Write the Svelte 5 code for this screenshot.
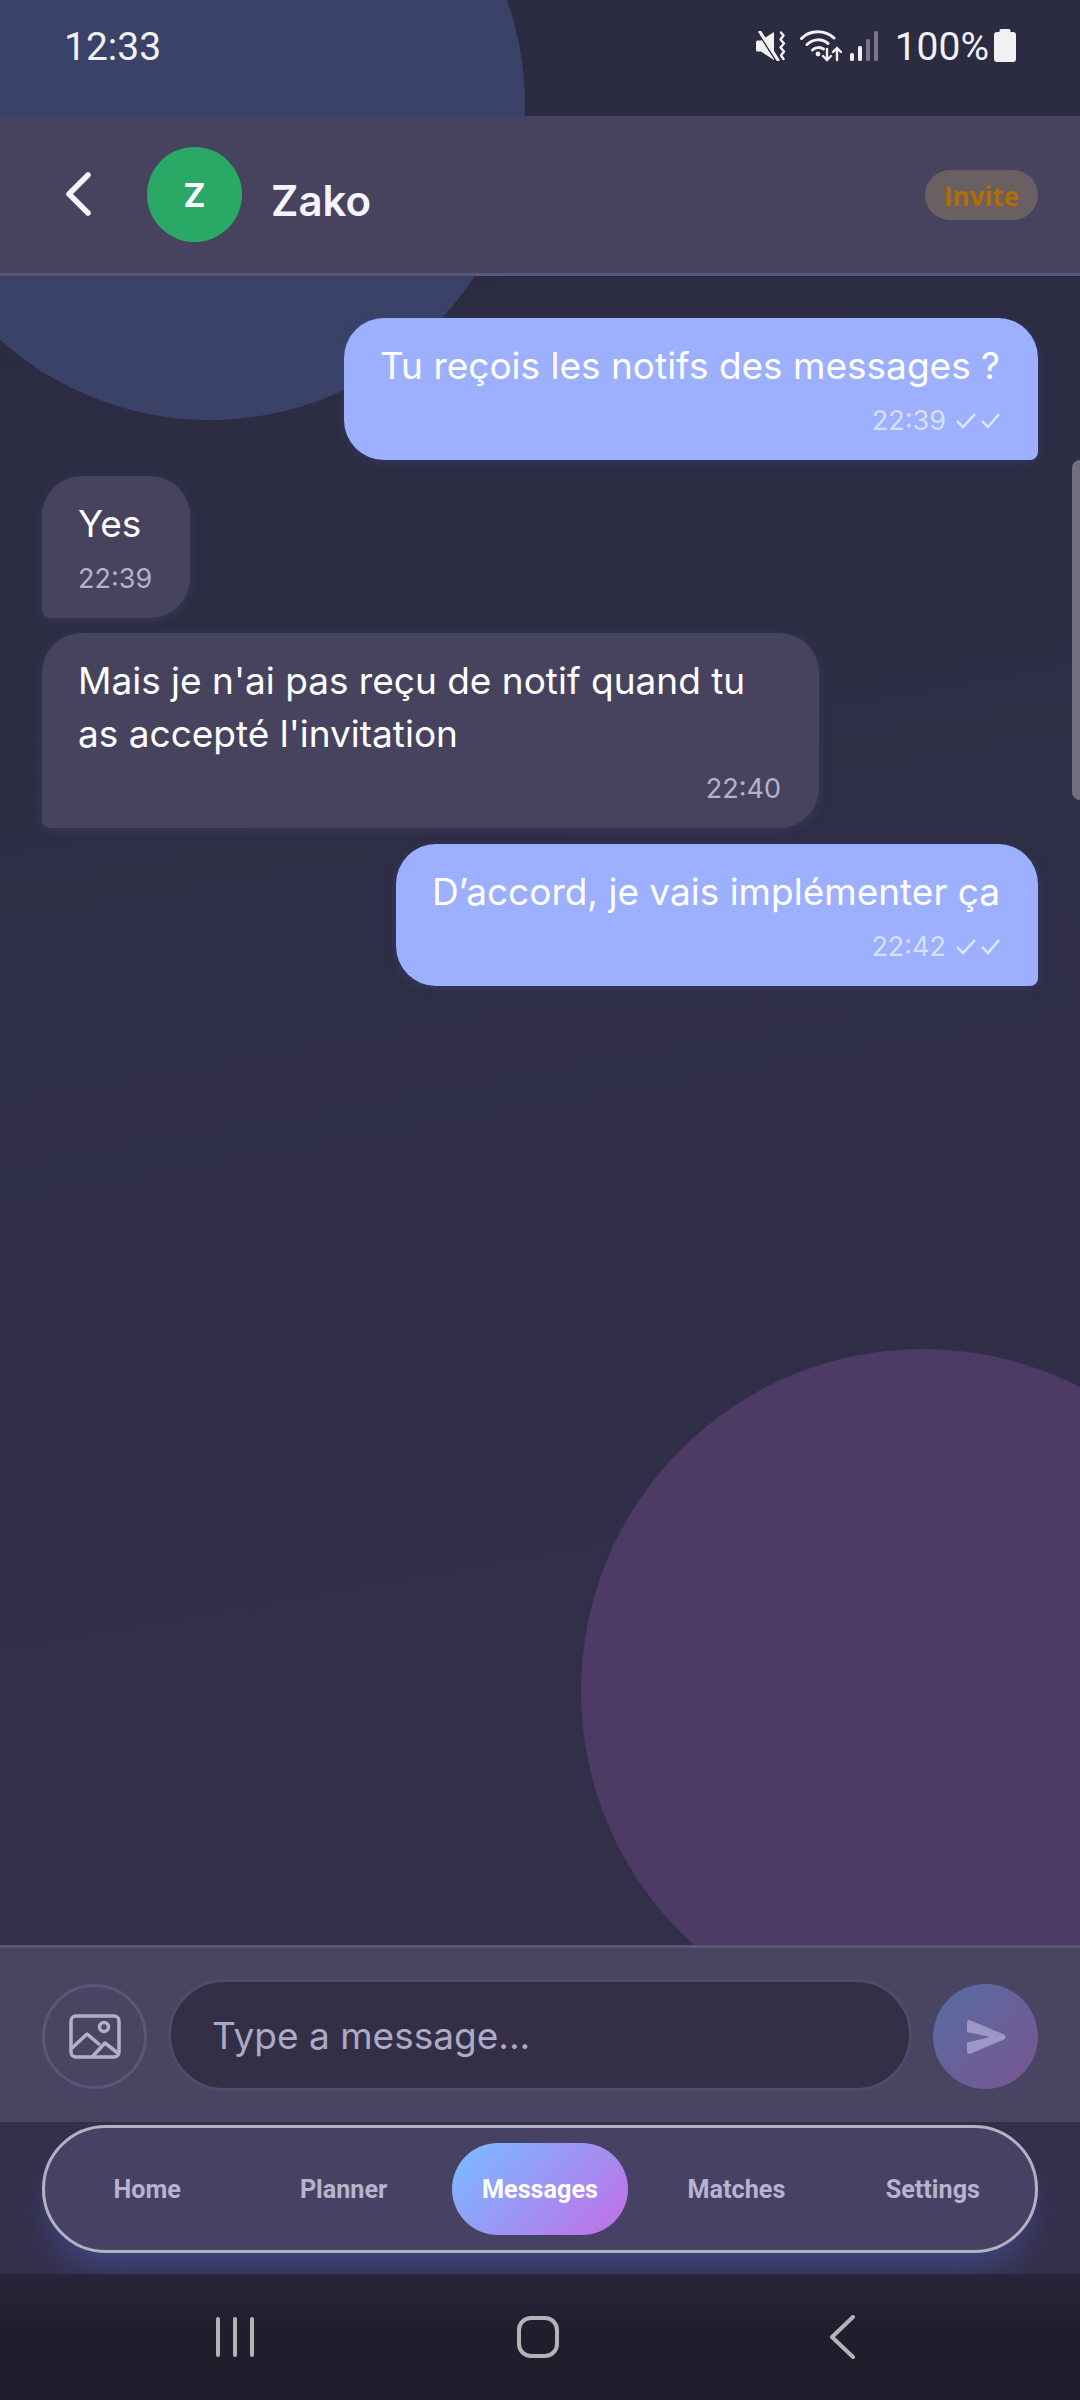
<script lang="ts">
const tabs = ["Home", "Planner", "Messages", "Matches", "Settings"];
const active = "Messages";

const messages = [
  { id: 1, mine: true, text: "Tu reçois les notifs des messages ?", time: "22:39" },
  { id: 2, mine: false, text: "Yes", time: "22:39" },
  { id: 3, mine: false, text: "Mais je n'ai pas reçu de notif quand tu as accepté l'invitation", time: "22:40" },
  { id: 4, mine: true, text: "D’accord, je vais implémenter ça", time: "22:42" },
];
</script>

<div class="screen">
  <div class="blob blue"></div>
  <div class="blob pink"></div>

  <div class="status">
    <span class="clock">12:33</span>
    <div class="status-right">
      <svg class="ic-mute" width="30" height="30" viewBox="0 0 30 30" fill="none">
        <path d="M0 11q0-1.500 1.500-1.500H5L18 1v28L5 20.500H1.500Q0 20.500 0 19z" fill="#f1f1f4" />
        <path d="M1 -1l20 31" stroke="#2b2b42" stroke-width="3" />
        <path d="M4 1l18 28" stroke="#f1f1f4" stroke-width="3.200" stroke-linecap="round" />
        <path d="M25 1.500l2.500 3-3 4 3.500 4-3.500 4 3.500 4-3 4 2.500 3.500" stroke="#f1f1f4" stroke-width="2.400" stroke-linecap="round" stroke-linejoin="round" />
      </svg>
      <svg class="ic-wifi" width="42" height="32" viewBox="0 0 42 32" fill="none" stroke="#f1f1f4" stroke-linecap="round">
        <path d="M1.500 8.500C10 -.5 25 -.5 34 8" stroke-width="3" />
        <path d="M7 14.500c6-6 15-6 21-1" stroke-width="3" />
        <path d="M12.500 20c3-3 8-3 11-1" stroke-width="3" />
        <circle cx="18" cy="24" r="2.400" fill="#f1f1f4" stroke="none" />
        <path d="M27 19v11m-4-4l4 4 4-4" stroke-width="2.400" />
        <path d="M37 30V18m-4 4l4-4 4 4" stroke-width="2.400" />
      </svg>
      <svg class="ic-signal" width="28" height="30" viewBox="0 0 28 30">
        <rect x="0" y="22" width="4" height="8" rx="1.500" fill="#f1f1f4" />
        <rect x="8" y="15" width="4" height="15" rx="1.500" fill="#f1f1f4" />
        <rect x="16" y="8" width="4" height="22" rx="1.500" fill="#77758a" />
        <rect x="24" y="0" width="4" height="30" rx="1.500" fill="#77758a" />
      </svg>
      <span class="battery-text">100%</span>
      <svg width="22" height="33" viewBox="0 0 22 33">
        <path d="M7 0h8q1.500 0 1.500 1.500V3H19q3 0 3 3v24q0 3-3 3H3q-3 0-3-3V6q0-3 3-3h2.500V1.500Q5.500 0 7 0z" fill="#f1f1f4" />
      </svg>
    </div>
  </div>

  <header class="topbar">
    <svg class="back" width="26" height="44" viewBox="0 0 26 44" fill="none">
      <path d="M23 3L4 22l19 19" stroke="#f6f4ff" stroke-width="5.500" stroke-linecap="round" stroke-linejoin="round" />
    </svg>
    <div class="avatar">Z</div>
    <span class="name">Zako</span>
    <span class="invite">Invite</span>
  </header>

  <main class="thread">
    {#each messages as m (m.id)}
      <div class="bubble" class:mine={m.mine}>
        <p>{m.text}</p>
        <div class="meta">
          <span>{m.time}</span>
          {#if m.mine}
            <svg width="44" height="16" viewBox="0 0 44 16" fill="none" stroke="#e4e8fd" stroke-width="2.400">
              <path d="M1 8l6 6L19 1" />
              <path d="M26 8l6 6L43 1" />
            </svg>
          {/if}
        </div>
      </div>
    {/each}
    <div class="scrollbar"></div>
  </main>

  <div class="composer">
    <button class="attach" aria-label="Attach image">
      <svg width="52" height="45" viewBox="0 0 52 45" fill="none" stroke="#b3afcb" stroke-width="3.500" stroke-linejoin="round">
        <rect x="2" y="2" width="48" height="41" rx="5" />
        <circle cx="35" cy="13" r="4.500" />
        <path d="M3 34l15-14 13 11M23 43l13-14 14 11" />
      </svg>
    </button>
    <div class="input"><span>Type a message...</span></div>
    <button class="send" aria-label="Send">
      <svg width="42" height="36" viewBox="0 0 42 36">
        <path d="M2 3.500Q2 .500 5 1.200L39 15.500q3 2.500 0 5L5 34.800Q2 35.500 2 32.500V23.500L25 18 2 13z" fill="#9d97c6" />
      </svg>
    </button>
  </div>

  <div class="navband">
    <nav class="tabs">
      {#each tabs as t}
        <span class="tab" class:on={t === active}>{t}</span>
      {/each}
    </nav>
  </div>

  <div class="sysnav">
    <svg width="40" height="42" viewBox="0 0 40 42" fill="#b5b3b8">
      <rect x="0" y="1" width="4" height="40" rx="2" />
      <rect x="17" y="1" width="4" height="40" rx="2" />
      <rect x="34" y="1" width="4" height="40" rx="2" />
    </svg>
    <svg width="42" height="42" viewBox="0 0 42 42" fill="none" stroke="#b5b3b8" stroke-width="4">
      <rect x="2" y="2" width="38" height="38" rx="12" />
    </svg>
    <svg width="26" height="44" viewBox="0 0 26 44" fill="none" stroke="#b5b3b8" stroke-width="4" stroke-linecap="round" stroke-linejoin="round">
      <path d="M24 2L3 22l21 20" />
    </svg>
  </div>
</div>

<style>
  :global(body) { margin: 0; background: #2b2b42; }
  .screen {
    position: relative;
    width: 1080px;
    height: 2400px;
    overflow: hidden;
    display: flex;
    flex-direction: column;
    background: linear-gradient(170deg, #2a2a40 0%, #2e2e46 40%, #36304b 100%);
    color: #fff;
    font-family: Inter, "Liberation Sans", sans-serif;
  }
  .blob { position: absolute; border-radius: 50%; }
  .blob.blue { left: -105px; top: -210px; width: 630px; height: 630px; background: #3a4268; }
  .blob.pink { left: 581px; top: 1349px; width: 684px; height: 684px; background: #4e3b65; }

  .status {
    position: relative;
    height: 116px;
    display: flex;
    justify-content: space-between;
    padding: 25px 64px 0 64px;
    box-sizing: border-box;
    font-family: Roboto, sans-serif;
    font-size: 39px;
    color: #f1f1f4;
  }
  .clock { line-height: 44px; height: 44px; }
  .status-right { display: flex; align-items: flex-start; height: 44px; }
  .status-right svg { margin-top: 4px; }
  .ic-mute { margin-right: 14px; margin-top: 6px !important; }
  .ic-wifi { margin-right: 8px; margin-top: 5px !important; }
  .ic-signal { margin-top: 6px !important; margin-right: 17px; }
  .battery-text { line-height: 44px; margin-right: 5px; }

  .topbar {
    position: relative;
    height: 160px;
    box-sizing: border-box;
    border-bottom: 3px solid #5a5678;
    background: #47435f;
    display: flex;
    align-items: center;
    padding: 0 42px 0 65px;
  }
  .back { margin-right: 56px; margin-top: -1px; }
  .avatar {
    width: 95px;
    height: 95px;
    border-radius: 50%;
    background: #2aa866;
    display: flex;
    align-items: center;
    justify-content: center;
    font-size: 33px;
    font-weight: 700;
    margin-right: 29px;
  }
  .name { font-size: 42px; font-weight: 600; color: #f5f3ff; margin-top: 11px; }
  .invite {
    margin-left: auto;
    width: 113px;
    height: 50px;
    border-radius: 25px;
    background: #6a5f62;
    color: #b06e00;
    font-family: "Open Sans", sans-serif;
    font-size: 26px;
    font-weight: 700;
    display: flex;
    align-items: center;
    justify-content: center;
    padding-top: 2px;
    box-sizing: border-box;
  }

  .thread {
    position: relative;
    flex: 1;
    display: flex;
    flex-direction: column;
    align-items: flex-start;
    gap: 15.700px;
    padding: 42px 42px 0;
  }
  .bubble {
    box-sizing: border-box;
    max-width: 777px;
    padding: 21px 38px 19px 36px;
    border-radius: 40px 40px 40px 8px;
    background: #47435f;
    box-shadow: 0 2px 10px rgba(70, 80, 140, 0.35);
    font-size: 37px;
    line-height: 53px;
  }
  .bubble p { margin: 0 0 9px; }
  .bubble.mine {
    align-self: flex-end;
    background: #9cb0ff;
    border-radius: 40px 40px 8px 40px;
  }
  .meta {
    display: flex;
    justify-content: flex-end;
    align-items: center;
    gap: 10px;
    font-size: 27px;
    line-height: 40px;
    color: #b5b1cc;
  }
  .bubble.mine .meta { color: #d9dffb; }
  .scrollbar {
    position: absolute;
    right: 0;
    top: 184px;
    width: 8px;
    height: 340px;
    border-radius: 8px 0 0 8px;
    background: #71707f;
  }

  .composer {
    position: relative;
    height: 177px;
    box-sizing: border-box;
    border-top: 3px solid #5a5678;
    background: #484462;
    display: flex;
    align-items: center;
    gap: 21px;
    padding: 3px 42px 0;
  }
  .attach, .send {
    flex: none;
    width: 105px;
    height: 105px;
    border-radius: 50%;
    padding: 0;
    display: flex;
    align-items: center;
    justify-content: center;
  }
  .attach { background: none; border: 3px solid #5a5678; }
  .send { border: none; background: linear-gradient(135deg, #576ca3, #7a5590); }
  .input {
    flex: 1;
    height: 112px;
    margin-top: -3px;
    box-sizing: border-box;
    border: 3px solid #4f4b6b;
    border-radius: 56px;
    background: #322f47;
    padding-left: 41px;
    display: flex;
    align-items: center;
    font-size: 37px;
    color: #aeaac5;
  }

  .navband {
    position: relative;
    height: 152px;
    box-sizing: border-box;
    padding: 3px 42px 0;
    overflow: hidden;
    background: #352f4a;
  }
  .tabs {
    box-sizing: border-box;
    height: 128px;
    border: 3px solid #b4b1c1;
    border-radius: 64px;
    background: #474264;
    display: flex;
    align-items: center;
    gap: 20px;
    padding: 0 14px;
    box-shadow: 0 22px 36px -8px rgba(70, 90, 170, 0.6);
    font-family: Roboto, sans-serif;
    font-size: 25.200px;
    font-weight: 700;
    color: #b8b4cf;
  }
  .tab {
    flex: 1;
    height: 92px;
    border-radius: 46px;
    display: flex;
    align-items: center;
    justify-content: center;
  }
  .tab.on {
    color: #fff;
    background: linear-gradient(135deg, #7fb6ff 10%, #c26de6 100%);
  }

  .sysnav {
    position: relative;
    height: 126px;
    background: linear-gradient(180deg, #262539 0%, #201d2c 50%);
    display: flex;
    align-items: center;
    box-sizing: border-box;
    padding-left: 216px;
  }
  .sysnav svg:nth-child(2) { margin-left: 261px; }
  .sysnav svg:nth-child(3) { margin-left: 270px; }
</style>
